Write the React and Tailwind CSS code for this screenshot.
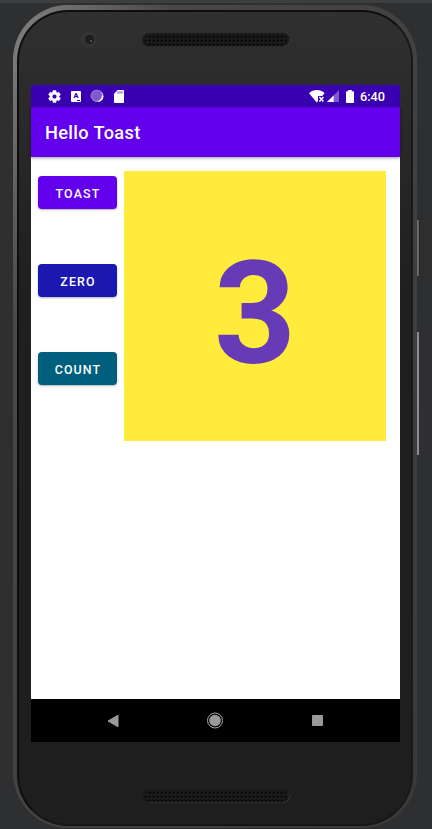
import React from "react";

function Speaker({ id }) {
  return (
    <svg width="148" height="14" viewBox="0 0 148 14" className="block">
      <defs>
        <pattern id={id} width="4" height="4" patternUnits="userSpaceOnUse" x="2" y="2">
          <rect x="1" y="1" width="1.5" height="1.5" fill="#000" />
          <rect x="2.5" y="2.5" width="1" height="1" fill="#2c2c2c" />
        </pattern>
      </defs>
      <rect x="0.5" y="0.5" width="147" height="13" rx="6.5" fill="#181818" stroke="#1d1d1d" />
      <rect x="3" y="2" width="142" height="11" rx="5" fill={`url(#${id})`} />
      <path d="M141.5 13.5a6.3 6.3 0 0 0 5.8-8" fill="none" stroke="#434343" strokeWidth="0.8" />
      <path d="M6 13.6H142" stroke="#303030" strokeWidth="0.6" />
    </svg>
  );
}

function SettingsIcon() {
  return (
    <svg width="15" height="15" viewBox="0 0 24 24" fill="#fff">
      <path d="M19.14 12.94c.04-.3.06-.61.06-.94s-.02-.64-.07-.94l2.03-1.58a.49.49 0 0 0 .12-.61l-1.92-3.32a.49.49 0 0 0-.59-.22l-2.39.96a7 7 0 0 0-1.62-.94l-.36-2.54a.48.48 0 0 0-.48-.41h-3.84a.47.47 0 0 0-.47.41l-.36 2.54c-.59.24-1.13.57-1.62.94l-2.39-.96a.48.48 0 0 0-.59.22L2.74 8.87a.47.47 0 0 0 .12.61l2.03 1.58a6 6 0 0 0 0 1.88l-2.03 1.58a.49.49 0 0 0-.12.61l1.92 3.32c.12.22.37.29.59.22l2.39-.96c.5.38 1.03.7 1.62.94l.36 2.54c.05.24.24.41.48.41h3.84c.24 0 .44-.17.47-.41l.36-2.54a7 7 0 0 0 1.62-.94l2.39.96c.22.08.47 0 .59-.22l1.92-3.32a.47.47 0 0 0-.12-.61zM12 15.8a3.8 3.8 0 1 1 0-7.6 3.8 3.8 0 0 1 0 7.6z" stroke="#fff" strokeWidth="0.9" />
    </svg>
  );
}

function StatusBar() {
  return (
    <div className="flex h-[22px] shrink-0 items-center bg-[#3900b1] pl-4 pr-[14px]">
      <SettingsIcon />
      <div className="relative ml-[9px] flex h-[11px] w-[10px] items-center justify-center rounded-[1px] bg-white">
        <span className="-mt-px text-[7.5px] font-black leading-none text-[#3900b1]">A</span>
        <span className="absolute bottom-px right-px h-px w-[3px] bg-[#3900b1]" />
      </div>
      <svg className="ml-[9px]" width="14" height="14" viewBox="0 0 14 14">
        <circle cx="7.6" cy="7.2" r="5.9" fill="#ddd0f3" />
        <circle cx="6.5" cy="6.6" r="5.9" fill="#8059cc" />
        <circle cx="6.7" cy="6.8" r="5.6" fill="none" stroke="#b39be0" strokeWidth="0.9" strokeDasharray="1.2 1" />
        <path d="M12.4 6.5a6 6 0 0 1-3.6 5.7" fill="none" stroke="#fff" strokeWidth="1.2" />
      </svg>
      <svg className="ml-[10px]" width="10" height="13" viewBox="0 0 10 13">
        <path d="M3.6 0H9a1 1 0 0 1 1 1v11a1 1 0 0 1-1 1H1a1 1 0 0 1-1-1V3.8z" fill="#fff" />
        <path d="M4 1.3v2.2M6 1.3v2.2M8 1.3v2.2" stroke="#3900b1" strokeWidth="0.8" />
      </svg>
      <svg className="ml-auto" width="16" height="13" viewBox="0 0 16 13">
        <path d="M0 3.3C4.2-1 11.4-1 15.6 3.3L13.2 6H9v5l-1.2 1.5z" fill="#fff" />
        <path d="M10.4 7l4 4.4M14.4 7l-4 4.4" stroke="#fff" strokeWidth="1.5" />
      </svg>
      <svg className="ml-[2px]" width="12" height="12" viewBox="0 0 12 12">
        <path d="M0 12L12 0v12z" fill="#8059cc" />
        <path d="M0 12l6.6-6.6V12z" fill="#fff" />
      </svg>
      <svg className="ml-[7px]" width="8" height="13" viewBox="0 0 8 13">
        <path d="M2.2 0h3.6v1.3H7.2a.8.8 0 0 1 .8.8v10.1a.8.8 0 0 1-.8.8H.8a.8.8 0 0 1-.8-.8V2.1a.8.8 0 0 1 .8-.8h1.4z" fill="#fff" />
      </svg>
      <span className="ml-[6px] mt-[2px] w-[26px] whitespace-nowrap text-[12.7px] font-medium leading-none text-white">6:40</span>
    </div>
  );
}

function ActionButton({ color, children }) {
  return (
    <button
      className={`flex h-[33px] w-[79px] items-center justify-center rounded-[4px] pl-px pt-[3px] text-[12.4px] font-medium tracking-[1.15px] text-white shadow-[0_1px_2px_rgba(0,0,0,0.3)] ${color}`}
    >
      {children}
    </button>
  );
}

export default function App() {
  return (
    <div className="relative h-[829px] w-[432px] overflow-hidden border-t-[3px] border-[#3c3e40] bg-[#2d2f31] pl-[13px] pt-[2px] font-['Roboto',sans-serif]">
      <div className="h-[823px] w-[404px] rounded-[55px] bg-linear-to-br from-[#858382] via-[#4a4647] via-20% to-[#3b3839] px-1 pb-[2px] pt-[5px]">
        <div className="flex h-full flex-col rounded-[51px] border-2 border-[#0e0e0e] border-b-[#161616] border-r-[#191919] bg-linear-to-b from-[#303030] via-[#1f1f1f] via-35% to-[#1e1e1e] pl-3">
          <div className="relative flex h-[73px] shrink-0 pl-[111px] pt-[21px]">
            <span className="absolute left-[50px] top-[19px] flex size-[16px] items-center justify-center rounded-full bg-[#343434]">
              <span className="flex size-[9px] items-center justify-center rounded-full bg-[#1d1c22]">
                <span className="ml-[4px] mt-[3px] size-[2px] rounded-full bg-[#6b5566]" />
              </span>
            </span>
            <Speaker id="top-grille" />
          </div>

          <div className="flex h-[657px] w-[369px] shrink-0 flex-col bg-white">
            <StatusBar />
            <header className="z-10 flex h-[50px] shrink-0 items-center bg-[#6200ee] pl-[14px] pt-[2px] shadow-[0_1px_3px_rgba(0,0,0,0.4)]">
              <h1 className="text-[18.2px] font-medium leading-none tracking-[0.35px] text-white">Hello Toast</h1>
            </header>
            <main className="flex flex-1 items-start pl-[7px] pt-[14px]">
              <div className="flex flex-col gap-[55px] pt-[5px]">
                <ActionButton color="bg-[#6200ee]">TOAST</ActionButton>
                <ActionButton color="bg-[#1a18b0]">ZERO</ActionButton>
                <ActionButton color="bg-[#005f7c]">COUNT</ActionButton>
              </div>
              <div className="ml-[7px] flex h-[270px] w-[262px] items-center justify-center bg-[#ffeb3b] pt-[17px]">
                <span className="text-[143px] font-bold leading-none text-[#673ab7]">3</span>
              </div>
            </main>
            <nav className="flex h-[43px] shrink-0 items-center bg-black pl-[76px]">
              <svg width="12" height="14" viewBox="0 0 12 14">
                <path d="M11 1.2v11.6L1 7z" fill="#999" stroke="#999" strokeLinejoin="round" />
              </svg>
              <svg className="ml-[87px]" width="18" height="18" viewBox="0 0 18 18">
                <circle cx="9" cy="8.5" r="7.5" fill="none" stroke="#aaa" />
                <circle cx="9" cy="8.5" r="5.8" fill="#999" />
              </svg>
              <span className="ml-[88px] h-[11px] w-[11px] rounded-[1px] bg-[#999]" />
            </nav>
          </div>

          <div className="pl-[111px] pt-[47px]">
            <Speaker id="bottom-grille" />
          </div>
        </div>
      </div>
      <span className="absolute left-[417px] top-[217px] h-[56px] w-[3px] border-r border-[#242424] bg-[#6c6869]" />
      <span className="absolute left-[417px] top-[329px] h-[123px] w-[2px] bg-[#8d8b8b]" />
    </div>
  );
}
